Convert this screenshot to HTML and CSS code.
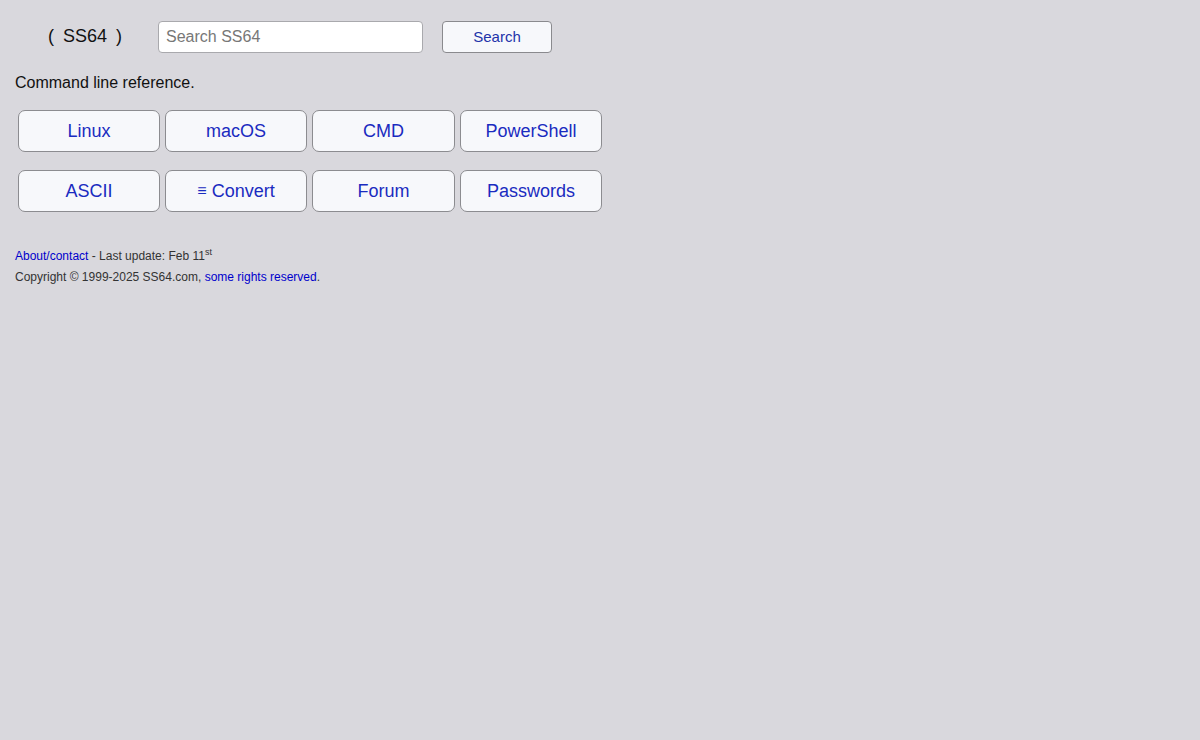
FILE: index.html
```html
<!DOCTYPE html>
<html>
<head>
<meta charset="utf-8">
<link rel="stylesheet" href="styles.css">
</head>
<body>
<div class="page">
  <div class="header">
    <div class="logo"><span>(</span><span>SS64</span><span>)</span></div>
    <input class="search" type="text" placeholder="Search SS64">
    <button class="search-btn">Search</button>
  </div>
  <p class="tagline">Command line reference.</p>
  <div class="grid">
    <a class="tile" href="#">Linux</a>
    <a class="tile" href="#">macOS</a>
    <a class="tile" href="#">CMD</a>
    <a class="tile" href="#">PowerShell</a>
    <a class="tile" href="#">ASCII</a>
    <a class="tile" href="#"><span class="menu">&#8801;</span> Convert</a>
    <a class="tile" href="#">Forum</a>
    <a class="tile" href="#">Passwords</a>
  </div>
  <div class="footer">
    <p><a href="#">About/contact</a> - Last update: Feb 11<sup>st</sup></p>
    <p>Copyright © 1999-2025 SS64.com, <a href="#">some rights reserved</a>.</p>
  </div>
</div>
</body>
</html>
```
FILE: styles.css
```css
html, body {
  margin: 0;
  padding: 0;
  background: #d9d8dd;
  font-family: "Liberation Sans", Arial, sans-serif;
  color: #111;
}
.page {
  padding: 21px 15px 0 15px;
}
.header {
  display: flex;
  align-items: center;
  height: 32px;
}
.logo {
  width: 143px;
  display: flex;
  gap: 9px;
  padding-left: 33px;
  box-sizing: border-box;
  font-size: 18px;
  color: #111;
  margin-top: -2px;
}
.search {
  width: 265px;
  height: 32px;
  box-sizing: border-box;
  border: 1px solid #a9a9ad;
  border-radius: 4px;
  background: #fff;
  font-family: "Liberation Sans", Arial, sans-serif;
  font-size: 16px;
  padding: 0 7px;
  margin: 0;
}
.search::placeholder {
  color: #777;
}
.search-btn {
  margin-left: 19px;
  width: 110px;
  height: 32px;
  box-sizing: border-box;
  border: 1px solid #8a8a8e;
  border-radius: 4px;
  background: #f7f8fb;
  color: #2233aa;
  font-family: "Liberation Sans", Arial, sans-serif;
  font-size: 15px;
  padding: 0 0 2px 0;
}
.tagline {
  margin: 19px 0 0 0;
  font-size: 16px;
  line-height: 22px;
  color: #111;
}
.grid {
  margin: 16px 0 0 3px;
  display: grid;
  grid-template-columns: 142px 142px 143px 142px;
  column-gap: 5px;
  row-gap: 18px;
}
.tile {
  height: 42px;
  box-sizing: border-box;
  border: 1px solid #8c8c90;
  border-radius: 7px;
  background: #f7f8fb;
  display: flex;
  align-items: center;
  justify-content: center;
  color: #1a2bc0;
  font-size: 18px;
  text-decoration: none;
}
.menu {
  font-size: 16px;
  margin-right: 5px;
}
.footer {
  margin-top: 34px;
  font-size: 12px;
  color: #333;
}
.footer p {
  margin: 0;
  line-height: 21px;
}
.footer a {
  color: #0000cc;
  text-decoration: none;
}
.footer sup {
  font-size: 9px;
  line-height: 0;
}
```
